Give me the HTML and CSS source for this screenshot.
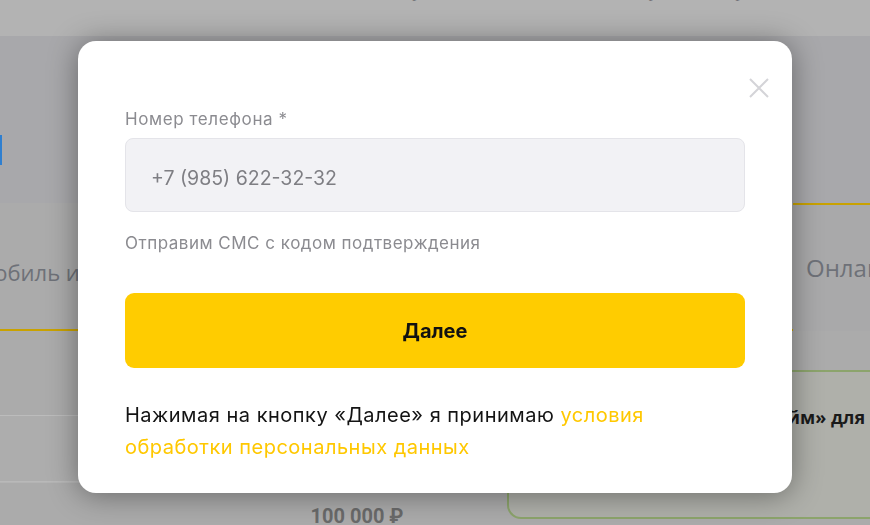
FILE: index.html
```html
<!DOCTYPE html>
<html lang="ru">
<head>
<meta charset="utf-8">
<title>Номер телефона</title>
<link rel="stylesheet" href="styles.css">
</head>
<body>
<div class="page">
  <header class="top"><h1 class="title">Оформите страховку онлайн за пару минут</h1></header>
  <section class="hero"><span class="mark"></span></section>
  <nav class="tabs">
    <div class="tab tab-active">Автомобиль и недвижимость</div>
    <div class="tab tab-next">Онлайн-сервисы</div>
  </nav>
  <section class="content">
    <div class="col-left">
      <div class="row r1"></div>
      <div class="row r2"></div>
      <div class="row r3"><span class="price">100 000 ₽</span></div>
    </div>
    <div class="card"><p class="card-title">Страхование «Тайм» для всей семьи</p></div>
  </section>
</div>
<div class="overlay">
  <div class="modal">
    <button class="close" aria-label="Закрыть">
      <svg width="20" height="20" viewBox="0 0 20 20"><path d="M1 1L19 19M19 1L1 19" stroke="#d4d4d8" stroke-width="2" fill="none"/></svg>
    </button>
    <label class="label">Номер телефона *</label>
    <div class="input">+7 (985) 622-32-32</div>
    <p class="hint">Отправим СМС с кодом подтверждения</p>
    <button class="next">Далее</button>
    <p class="agree">Нажимая на кнопку «Далее» я принимаю <a class="link">условия обработки персональных данных</a></p>
  </div>
</div>
</body>
</html>
```
FILE: styles.css
```css
html, body {
  margin: 0;
  padding: 0;
}
body {
  width: 870px;
  height: 525px;
  overflow: hidden;
  background: #a8a8ab;
  font-family: Inter, Roboto, "Liberation Sans", sans-serif;
}
.page {
  width: 870px;
}
.top {
  height: 36px;
  background: #b3b3b3;
  overflow: hidden;
  text-align: center;
}
.title {
  margin: -35px 0 0;
  font-size: 30px;
  line-height: 36px;
  font-weight: 700;
  color: #3a3a44;
}
.hero {
  height: 167px;
  background: #a8a8ab;
  display: flex;
  flex-direction: column;
}
.mark {
  display: block;
  width: 2px;
  height: 30px;
  margin-top: 99px;
  background: #2f7fd0;
}
.tabs {
  display: flex;
  height: 128px;
  margin-left: -72px;
  background: #ababab;
}
.tab {
  font-family: "Open Sans", sans-serif;
  font-size: 22px;
  line-height: 30px;
  color: #6e7178;
  box-sizing: border-box;
  white-space: nowrap;
  overflow: hidden;
}
.tab-active {
  width: 865px;
  padding-top: 54px;
  border-bottom: 2px solid #c9a200;
}
.tab-next {
  flex: 1;
  padding-top: 48px;
  padding-left: 13px;
  font-size: 24px;
  border-top: 2px solid #c9a200;
  background: #a9a9aa;
}
.content {
  display: flex;
  height: 200px;
  background: #ababab;
}
.col-left {
  width: 507px;
  display: flex;
  flex-direction: column;
}
.row {
  box-sizing: border-box;
}
.r1 {
  height: 85px;
  border-bottom: 1px solid #bcbcbc;
}
.r2 {
  height: 66px;
  background: #adadad;
  border-bottom: 1px solid #b9b9b9;
}
.r3 {
  padding-top: 5px;
  border-top: 1px solid #b4b4b4;
  text-align: center;
  padding-left: 207px;
}
.price {
  display: inline-block;
  margin-top: 16px;
  font-family: Roboto, sans-serif;
  font-size: 20px;
  font-weight: 700;
  color: #6a6a6a;
}
.card {
  flex: 1;
  margin-top: 39px;
  height: 149px;
  box-sizing: border-box;
  border: 2px solid #8ca46c;
  border-right: none;
  border-radius: 14px 0 0 14px;
  background: #afb0aa;
  overflow: hidden;
}
.card-title {
  margin: 33px 0 0 118px;
  font-family: "Open Sans", sans-serif;
  font-size: 18px;
  font-weight: 700;
  color: #1a1a1a;
  white-space: nowrap;
}
.overlay {
  position: fixed;
  inset: 0;
  display: flex;
  justify-content: center;
  align-items: flex-start;
}
.modal {
  position: relative;
  margin-top: 41px;
  width: 714px;
  height: 452px;
  box-sizing: border-box;
  padding: 68px 47px 30px;
  background: #ffffff;
  border-radius: 18px;
  box-shadow: 0 2px 30px rgba(0, 0, 0, 0.4);
  display: flex;
  flex-direction: column;
}
.close {
  position: absolute;
  top: 37px;
  right: 23px;
  width: 20px;
  height: 20px;
  padding: 0;
  border: none;
  background: none;
}
.close svg {
  display: block;
}
.label {
  display: block;
  font-size: 17px;
  letter-spacing: 0.6px;
  line-height: 20px;
  color: #8b8b90;
}
.input {
  margin-top: 9px;
  height: 74px;
  box-sizing: border-box;
  padding: 5px 0 0 25px;
  display: flex;
  align-items: center;
  background: #f2f2f5;
  border: 1px solid #e4e4e9;
  border-radius: 8px;
  font-size: 19.5px;
  color: #7e7e83;
}
.hint {
  margin: 21px 0 0;
  font-size: 17px;
  letter-spacing: 0.5px;
  line-height: 20px;
  color: #8b8b90;
}
.next {
  margin-top: 40px;
  height: 75px;
  width: 620px;
  border: none;
  border-radius: 9px;
  background: #ffcc00;
  font-family: Inter, sans-serif;
  font-size: 20px;
  font-weight: 700;
  color: #111111;
}
.agree {
  margin: 31px 0 0;
  font-size: 20px;
  letter-spacing: 0.5px;
  line-height: 32px;
  color: #141414;
}
.link {
  color: #ffc800;
  text-decoration: none;
}
```
